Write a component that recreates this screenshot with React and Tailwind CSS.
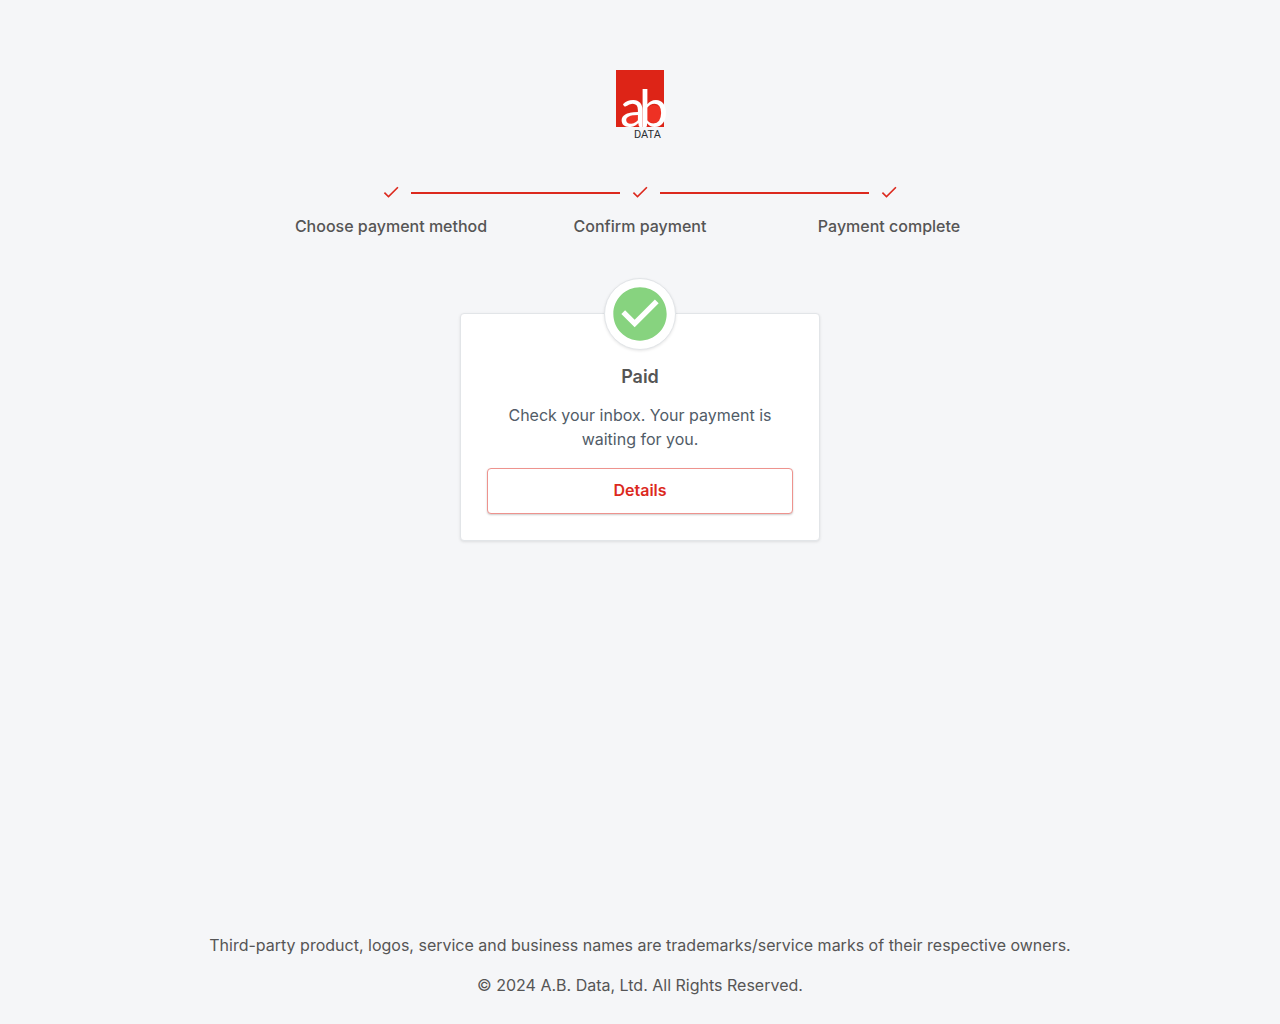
import React from 'react';

const steps = ['Choose payment method', 'Confirm payment', 'Payment complete'];

function Logo() {
  return (
    <svg width="60" height="70" viewBox="0 0 60 70" className="overflow-visible" role="img" aria-label="A.B. Data">
      <rect x="6" width="48" height="57" fill="#dd2417" />
      <rect x="16" y="43" width="13" height="13" fill="#ee3124" />
      <circle cx="44" cy="44" r="9" fill="#ee3124" />
      <g fill="#fff" fontFamily="Lato, sans-serif" fontSize="52">
        <text x="10" y="57">a</text>
        <text x="29" y="57">b</text>
      </g>
      <text x="24" y="68" fill="#2b2f33" fontFamily="Roboto, sans-serif" fontSize="11">
        DATA
      </text>
    </svg>
  );
}

function StepCheck() {
  return (
    <svg className="size-5" viewBox="0 0 24 24" fill="#dc291e" aria-hidden="true">
      <path d="M9 16.2 4.8 12l-1.4 1.4L9 19 21 7l-1.4-1.4z" />
    </svg>
  );
}

function Stepper() {
  return (
    <ol className="grid w-full max-w-[747px] grid-cols-3">
      {steps.map((label, index) => (
        <li key={label} className="flex flex-col items-center">
          <div className="flex w-full items-center gap-[10px]">
            <span className={index > 0 ? 'mt-[2px] h-[2px] flex-1 bg-[#dc291e]' : 'flex-1'} />
            <StepCheck />
            <span className={index < steps.length - 1 ? 'mt-[2px] h-[2px] flex-1 bg-[#dc291e]' : 'flex-1'} />
          </div>
          <span className="mt-3 text-center font-medium">{label}</span>
        </li>
      ))}
    </ol>
  );
}

function PaidCard() {
  return (
    <section className="mt-[75px] flex w-full max-w-[360px] flex-col items-center rounded border border-[#e2e5e8] bg-white px-[26px] pb-[26px] shadow-[0_1px_3px_rgba(0,0,0,0.1)]">
      <div className="-mt-9 flex size-[72px] items-center justify-center rounded-full border border-[#e2e5e8] bg-white shadow-[0_1px_3px_rgba(0,0,0,0.1)]">
        <svg className="size-16" viewBox="0 0 24 24" fill="#87d37f" aria-hidden="true">
          <path d="M12 2C6.48 2 2 6.48 2 12s4.48 10 10 10 10-4.48 10-10S17.52 2 12 2m-2 15-5-5 1.41-1.41L10 14.17l7.59-7.59L19 8z" />
        </svg>
      </div>
      <h1 className="mt-[13px] text-lg leading-7 font-semibold">Paid</h1>
      <p className="mt-3 text-center text-[#515c67]">
        Check your inbox. Your payment is waiting for you.
      </p>
      <button
        type="button"
        className="mt-[17px] h-[46px] w-full rounded border border-[#ee938e] bg-white pb-[2px] font-semibold text-[#dc291e] shadow-[0_1px_2px_rgba(0,0,0,0.2)]"
      >
        Details
      </button>
    </section>
  );
}

function App() {
  return (
    <div className="flex min-h-screen flex-col items-center bg-[#f5f6f8] px-4 pt-[70px] pb-[27px] font-['Inter',sans-serif] text-base text-[#555]">
      <header className="mb-[42px]">
        <Logo />
      </header>
      <main className="flex w-full flex-1 flex-col items-center">
        <Stepper />
        <PaidCard />
      </main>
      <footer className="mt-10 space-y-4 text-center">
        <p>
          Third-party product, logos, service and business names are trademarks/service marks of their
          respective owners.
        </p>
        <p>© 2024 A.B. Data, Ltd. All Rights Reserved.</p>
      </footer>
    </div>
  );
}

export default App;
